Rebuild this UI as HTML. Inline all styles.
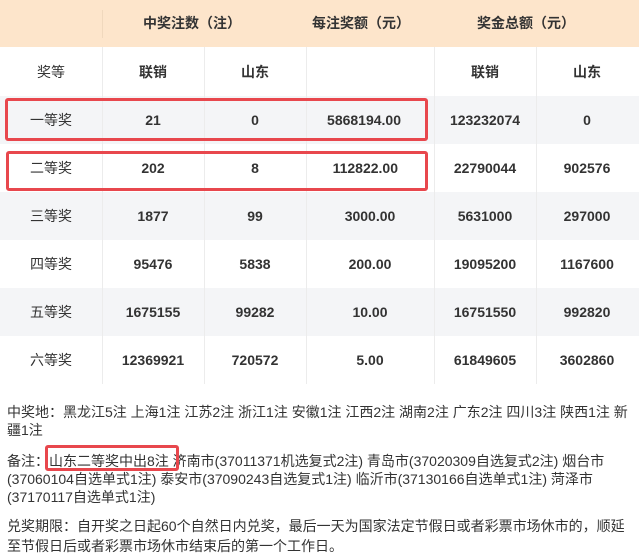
<!DOCTYPE html><html><head><meta charset="utf-8"><style>
body{margin:0;width:639px;height:560px;overflow:hidden;background:#fff;font-family:"Liberation Sans","Noto Sans CJK SC",sans-serif;color:#333;font-size:13px;position:relative}
.hd{position:absolute;left:0;top:0;width:639px;height:47px;background:#fde5cb}
.r{position:absolute;left:0;width:639px;height:48px}
.g{background:#f4f5f7}
.c{position:absolute;height:48px;line-height:48px;text-align:center;font-weight:bold;font-size:14px}
.n{font-weight:normal}
.v{position:absolute;top:47px;height:337px;width:1px;background:#ececec}
.box{position:absolute;border:3px solid #e8474d;border-radius:3px;box-sizing:border-box}
.t{position:absolute;left:7px;width:632px;line-height:18px;font-size:14px;white-space:nowrap}
</style></head><body>
<div class="hd"></div>
<div style="position:absolute;left:102px;top:10px;width:1px;height:28px;background:#f0d8bd"></div>
<div class="c" style="left:102px;width:180px;top:0;height:47px;line-height:47px">中奖注数（注）</div>
<div class="c" style="left:306px;width:110px;top:0;height:47px;line-height:47px">每注奖额（元）</div>
<div class="c" style="left:434px;width:184px;top:0;height:47px;line-height:47px">奖金总额（元）</div>
<div class="r g" style="top:96px"></div>
<div class="r g" style="top:192px"></div>
<div class="r g" style="top:288px"></div>
<div class="v" style="left:102px"></div><div class="v" style="left:204px"></div><div class="v" style="left:306px"></div><div class="v" style="left:434px"></div><div class="v" style="left:536px"></div>
<div id="rows"></div>
<div class="c n" style="left:0;width:102px;top:48px">奖等</div>
<div class="c" style="left:102px;width:102px;top:48px">联销</div>
<div class="c" style="left:204px;width:102px;top:48px">山东</div>
<div class="c" style="left:434px;width:102px;top:48px">联销</div>
<div class="c" style="left:536px;width:102px;top:48px">山东</div>
<script>
var d=[["一等奖","21","0","5868194.00","123232074","0"],["二等奖","202","8","112822.00","22790044","902576"],["三等奖","1877","99","3000.00","5631000","297000"],["四等奖","95476","5838","200.00","19095200","1167600"],["五等奖","1675155","99282","10.00","16751550","992820"],["六等奖","12369921","720572","5.00","61849605","3602860"]];
var L=[[0,102],[102,102],[204,102],[306,128],[434,102],[536,102]],h="";
d.forEach(function(r,i){r.forEach(function(s,j){var st="left:"+L[j][0]+"px;width:"+L[j][1]+"px;top:"+(96+i*48)+"px";if(j==3&&i<2)st="left:306px;width:"+(i==0?95:92)+"px;text-align:right;top:"+(96+i*48)+"px";h+='<div class="c'+(j==0?' n':'')+'" style="'+st+'">'+s+'</div>';});});
document.getElementById("rows").innerHTML=h;
</script>
<div class="box" style="left:5px;top:98px;width:423px;height:43px"></div>
<div class="box" style="left:6px;top:151px;width:422px;height:40px"></div>
<div class="t" style="top:403px">中奖地：黑龙江5注 上海1注 江苏2注 浙江1注 安徽1注 江西2注 湖南2注 广东2注 四川3注 陕西1注 新<br>疆1注</div>
<div class="t" style="top:452px">备注：山东二等奖中出8注 济南市(37011371机选复式2注) 青岛市(37020309自选复式2注) 烟台市<br>(37060104自选单式1注) 泰安市(37090243自选复式1注) 临沂市(37130166自选单式1注) 菏泽市<br>(37170117自选单式1注)</div>
<div class="box" style="left:45px;top:445px;width:134px;height:26px"></div>
<div class="t" style="top:516px;line-height:20px">兑奖期限：自开奖之日起60个自然日内兑奖，最后一天为国家法定节假日或者彩票市场休市的，顺延<br>至节假日后或者彩票市场休市结束后的第一个工作日。</div>
</body></html>
